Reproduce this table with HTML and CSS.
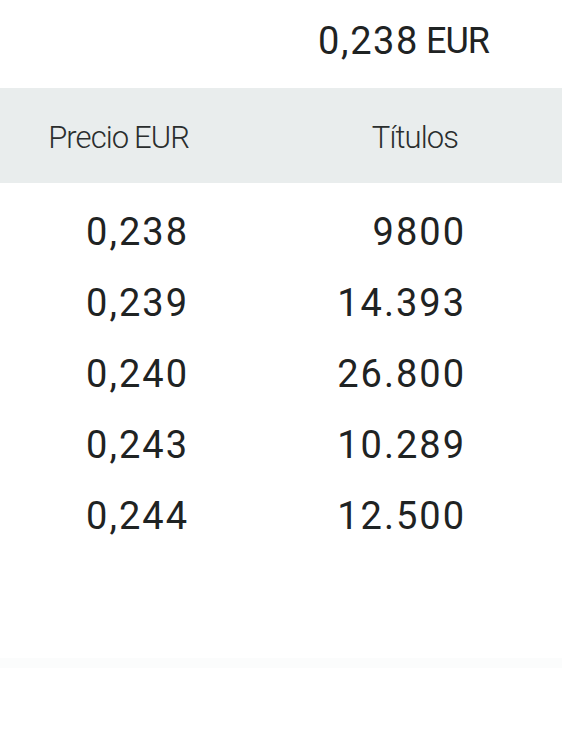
FILE: index.html
```html
<!DOCTYPE html>
<html lang="es">
<head>
<meta charset="utf-8">
<link rel="stylesheet" href="styles.css">
</head>
<body>
<div class="page">
  <div class="top"><span class="last-num">0,238</span><span class="last-unit">EUR</span></div>
  <div class="thead">
    <div class="th c1">Precio EUR</div>
    <div class="th c2">Títulos</div>
  </div>
  <div class="tbody">
    <div class="row"><div class="td">0,238</div><div class="td">9800</div></div>
    <div class="row"><div class="td">0,239</div><div class="td">14.393</div></div>
    <div class="row"><div class="td">0,240</div><div class="td">26.800</div></div>
    <div class="row"><div class="td">0,243</div><div class="td">10.289</div></div>
    <div class="row"><div class="td">0,244</div><div class="td">12.500</div></div>
  </div>
  <div class="footer-line"></div>
</div>
</body>
</html>
```

FILE: styles.css
```css
html, body {
  margin: 0;
  padding: 0;
  background: #ffffff;
}
body {
  font-family: Roboto, "Open Sans", sans-serif;
  color: #1f2323;
  width: 562px;
  height: 740px;
  overflow: hidden;
}
.page {
  display: flex;
  flex-direction: column;
}
.top {
  height: 88px;
  line-height: 82px;
  display: flex;
  justify-content: flex-end;
  gap: 9px;
  padding-right: 73px;
  font-size: 38px;
}
.last-num {
  letter-spacing: 1.6px;
  margin-right: -2px;
}
.last-unit {
  letter-spacing: -1px;
  font-size: 36px;
}
.thead {
  display: grid;
  grid-template-columns: 189px 269px;
  height: 95px;
  box-sizing: border-box;
  padding-top: 4px;
  line-height: 91px;
  background: #e9eded;
  font-size: 31px;
  font-weight: 300;
  color: #2a2e2e;
  letter-spacing: -0.9px;
}
.th {
  text-align: right;
}
.c1 {
  word-spacing: -1px;
}
.tbody {
  margin-top: 14px;
  display: flex;
  flex-direction: column;
}
.row {
  display: grid;
  grid-template-columns: 189px 277px;
  height: 71px;
  line-height: 71px;
  font-size: 38px;
  letter-spacing: 2px;
}
.td {
  text-align: right;
}
.footer-line {
  margin-top: 106px;
  height: 10px;
  background: #fbfcfc;
}
```
